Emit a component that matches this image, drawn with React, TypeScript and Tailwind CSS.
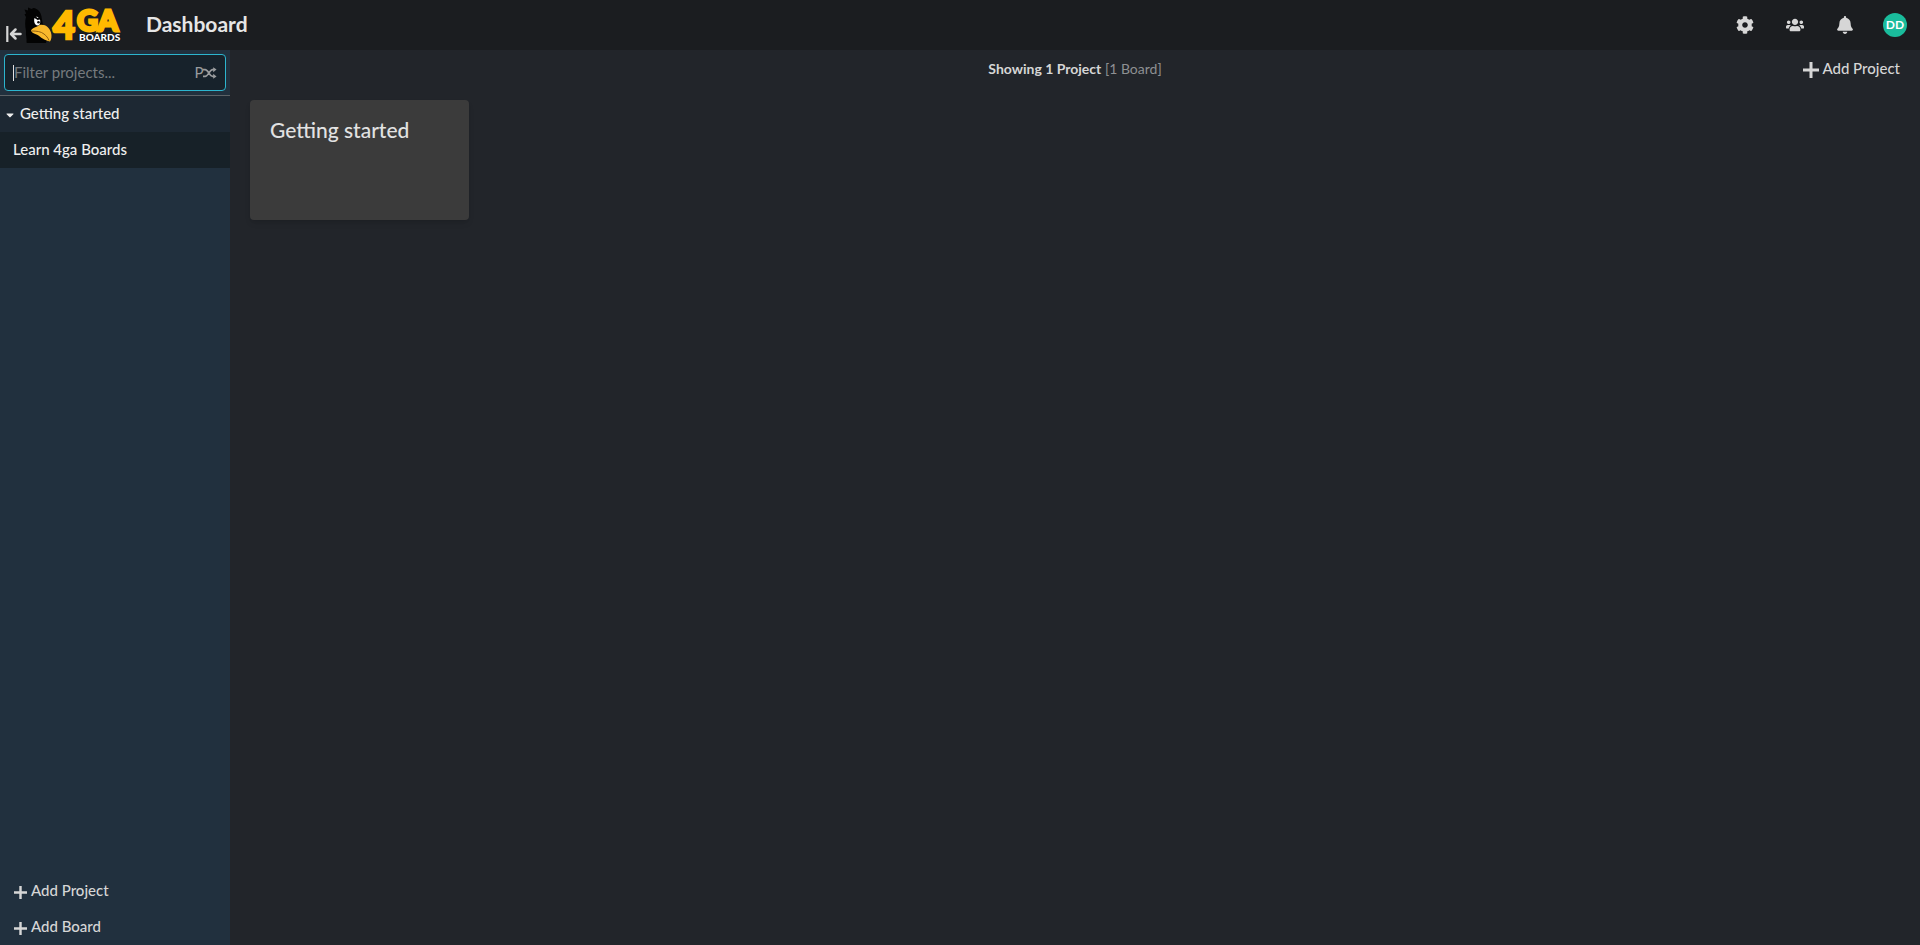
import React from 'react';
import { FaBell, FaCaretDown, FaCog, FaUsers } from 'react-icons/fa';

function PlusIcon({ className }: { className: string }) {
  return (
    <svg viewBox="0 0 16 16" className={className} fill="currentColor" aria-hidden="true">
      <path d="M6.5 0h3v6.5H16v3H9.5V16h-3V9.5H0v-3h6.5z" />
    </svg>
  );
}

function CollapseIcon() {
  return (
    <svg viewBox="0 0 16 18" className="h-[18px] w-4" fill="none" stroke="currentColor" aria-hidden="true">
      <path d="M1.300 1v16" strokeWidth="2.200" />
      <path d="M14.500 9H5.500M9.500 4.500L5 9l4.500 4.500" strokeWidth="2.500" strokeLinecap="round" strokeLinejoin="round" />
    </svg>
  );
}

function ShuffleIcon() {
  return (
    <svg viewBox="0 0 14 12" className="h-3 w-3.5" fill="none" stroke="currentColor" aria-hidden="true">
      <path d="M0 2.500h2.200C5.500 2.500 6.500 9.500 10 9.500h1.500M0 9.500h2.200C5.500 9.500 6.500 2.500 10 2.500h1.500" strokeWidth="1.700" />
      <path d="M10.500 0L14 2.500L10.500 5.200zM10.500 6.800L14 9.500L10.500 12z" fill="currentColor" stroke="none" />
    </svg>
  );
}

function Logo() {
  return (
    <svg viewBox="0 0 100 50" className="h-[50px] w-[100px]" role="img" aria-label="4ga Boards">
      <g transform="translate(0 5)">
        <path
          d="M4.500 37.500C5 33 3.500 30 4 26C3 21 2.800 16 4 12L2.500 9.500L4 8.500L2.500 4.500L6 5.500L6 2.500L9.500 4L11.500 3C15.500 3.500 19 7 19.500 12L21 20L20 27L25 34L24 38H5z"
          fill="#030303"
        />
        <path d="M12.500 13c1.500-2.500 5-1.500 5.700 2.500c.3 3-.7 5-2.500 5c-3 0-4.200-4.500-3.200-7.500z" fill="#fff" />
        <path d="M11 11l5.500 3.500M18.500 10.500l-2 4" stroke="#050505" strokeWidth="1.900" />
        <circle cx="16.500" cy="17.300" r="1.300" fill="#111" />
        <path
          d="M9 25.500C10.500 22.500 14.500 22.500 17.500 20C23 18.500 27.500 22.500 29 27.500C30 31 29.500 34.500 28 36.500C24.500 36 20 33.500 16.500 30.500C13 28.500 9.500 28 9 25.500z"
          fill="#f9b92c"
        />
        <path d="M9.500 26c5 0 9.500 .5 12.500 3c2.500 1.900 4 4 5 6.500" fill="none" stroke="#7a4b08" strokeWidth=".8" />
      </g>
      <g className="font-['Lato',sans-serif] font-black" fill="#ffb900" stroke="#ffb900">
        <text x="31" y="39" fontSize="38" strokeWidth="2.500">4</text>
        <text x="55" y="31" fontSize="29" strokeWidth="2.800">GA</text>
      </g>
      <text
        x="57"
        y="41"
        fontSize="10"
        className="font-['Lato',sans-serif] font-black"
        fill="#fff"
        stroke="#16181b"
        strokeWidth="2"
        paintOrder="stroke"
      >
        BOARDS
      </text>
    </svg>
  );
}

export default function App() {
  return (
    <div className="flex min-h-screen flex-col bg-[#22252a] font-['Lato','Noto_Sans',sans-serif] text-sm text-[#d6d6d6]">
      <header className="flex h-[50px] items-center bg-[#1b1d20]">
        <button type="button" aria-label="Collapse sidebar" className="mt-[18px] ml-1.5">
          <CollapseIcon />
        </button>
        <a href="#home">
          <Logo />
        </a>
        <h1 className="ml-6 pb-0.5 text-[21px] leading-6 font-bold text-[#e6e6e6]">Dashboard</h1>
        <nav className="ml-auto flex items-center pr-[13px]">
          <button type="button" aria-label="Settings" className="flex w-[50px] justify-center">
            <FaCog size={18} />
          </button>
          <button type="button" aria-label="Users" className="flex w-[50px] justify-center">
            <FaUsers size={18} />
          </button>
          <button type="button" aria-label="Notifications" className="flex w-[50px] justify-center">
            <FaBell size={18} />
          </button>
          <button type="button" aria-label="Account" className="ml-[13px] flex size-6 items-center justify-center rounded-full bg-[#1abc9c] text-xs font-bold text-white">
            DD
          </button>
        </nav>
      </header>
      <div className="flex grow">
        <aside className="flex w-[230px] shrink-0 flex-col bg-[#21303e]">
          <div className="border-b border-[#5c6166] p-1">
            <div className="flex h-[37px] items-center rounded-sm border border-[#2cb5cf] bg-[#17222b] px-2 text-[#9a9c9e]">
              <span className="h-4 w-px bg-[#e0e0e0]" />
              <input
                type="text"
                aria-label="Filter projects"
                placeholder="Filter projects..."
                className="min-w-0 grow bg-transparent text-[15px] text-[#e6e6e6] outline-none placeholder:text-[#757a7e]"
              />
              <span className="text-[15px]">P</span>
              <ShuffleIcon />
            </div>
          </div>
          <button type="button" className="flex h-9 items-center gap-1 bg-[#1d2833] pl-1 text-[15px] font-medium text-[#eeeeee]">
            <FaCaretDown size={12} className="mt-0.5" />
            Getting started
          </button>
          <a href="#board" className="flex h-9 items-center bg-[#172128] pl-[13px] text-[15px] font-medium text-[#eeeeee]">
            Learn 4ga Boards
          </a>
          <div className="mt-auto flex flex-col">
            <button type="button" className="flex h-9 items-center gap-1 pb-px pl-3.5 text-[15px] font-medium">
              <PlusIcon className="mt-1 size-[13px]" />
              Add Project
            </button>
            <button type="button" className="flex h-9 items-center gap-1 pb-px pl-3.5 text-[15px] font-medium">
              <PlusIcon className="mt-1 size-[13px]" />
              Add Board
            </button>
          </div>
        </aside>
        <main className="grow px-5">
          <div className="grid h-[50px] grid-cols-[1fr_auto_1fr] pt-[7px]">
            <span />
            <p className="leading-6">
              <strong>Showing 1 Project</strong> <span className="text-[#8e9092]">[1 Board]</span>
            </p>
            <button type="button" className="flex h-6 items-center gap-[3px] justify-self-end text-[15px] font-medium">
              <PlusIcon className="mt-0.5 size-4" />
              Add Project
            </button>
          </div>
          <a href="#project" className="block h-[120px] w-[219px] rounded bg-[#3b3b3b] px-5 py-[18px] text-[21px] leading-6 font-medium text-[#e2e2e2] shadow-md">
            Getting started
          </a>
        </main>
      </div>
    </div>
  );
}
